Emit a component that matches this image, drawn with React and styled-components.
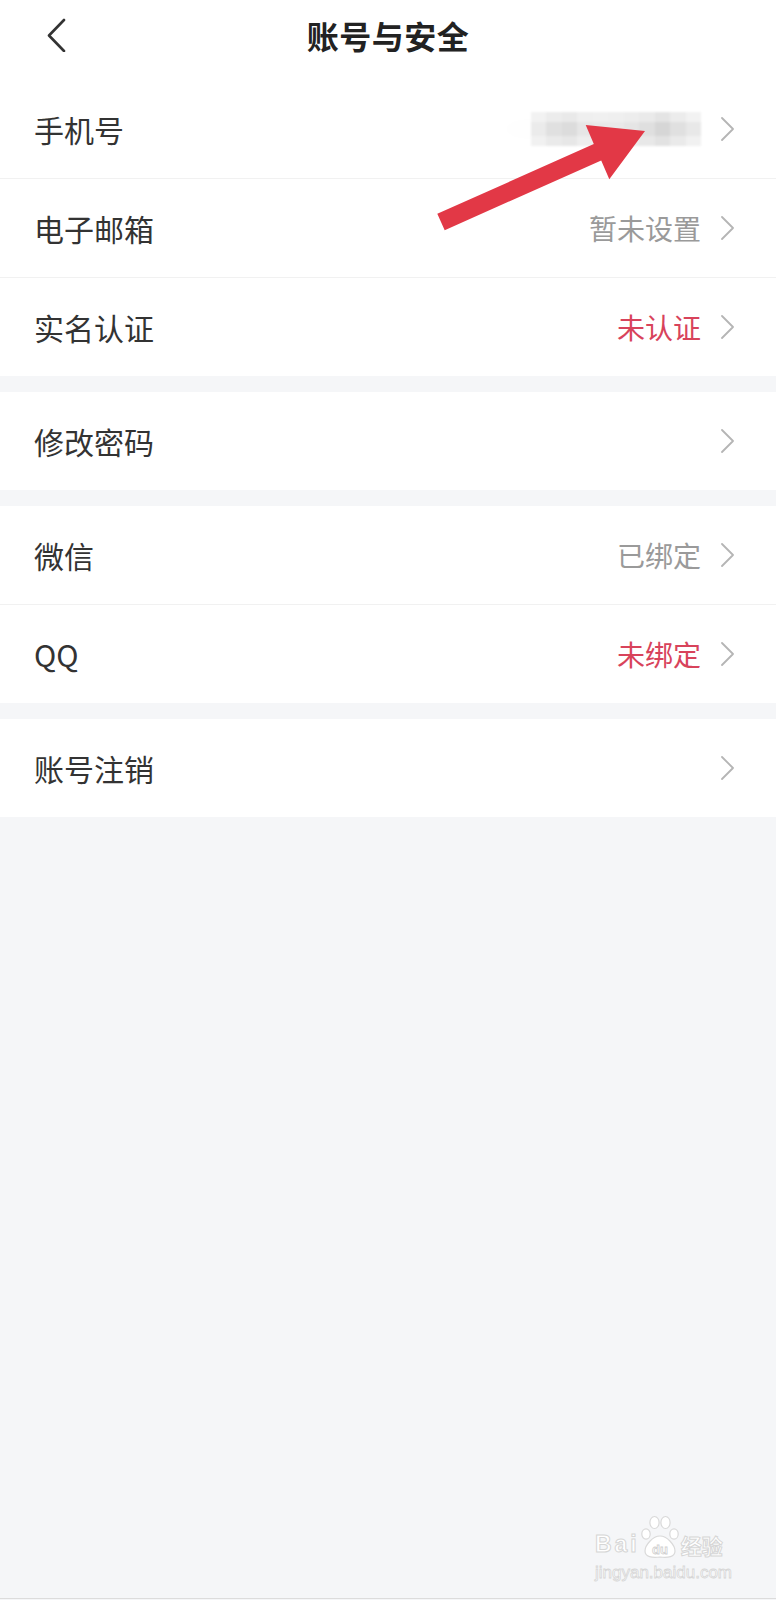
import React from "react";
import styled, { createGlobalStyle } from "styled-components";

const GlobalStyle = createGlobalStyle`
  html, body {
    margin: 0;
    padding: 0;
    background: #f5f6f8;
  }
  body {
    font-family: "Noto Sans CJK SC", "Noto Sans", sans-serif;
  }
`;

const groups = [
  [
    { label: "手机号", masked: true },
    { label: "电子邮箱", value: "暂未设置" },
    { label: "实名认证", value: "未认证", warn: true },
  ],
  [{ label: "修改密码" }],
  [
    { label: "微信", value: "已绑定" },
    { label: "QQ", value: "未绑定", warn: true },
  ],
  [{ label: "账号注销" }],
];

// rough pixel shades for the blurred phone number
const mosaic = [
  ["#f2f2f2", "#ececec", "#e9e9e9", "#efefef", "#f0f0f0", "#efefef", "#ededed", "#eaeaea", "#e4e4e4", "#ececec", "#f2f2f2"],
  ["#ebebeb", "#e0e0e0", "#dcdcdc", "#e6e6e6", "#e8e8e8", "#e9e9e9", "#e5e5e5", "#dfdfdf", "#d6d6d6", "#e0e0e0", "#e8e8e8"],
  ["#f1f1f1", "#eaeaea", "#e7e7e7", "#eeeeee", "#f0f0f0", "#efefef", "#ececec", "#e8e8e8", "#e2e2e2", "#eaeaea", "#f1f1f1"],
];

export default function App() {
  return (
    <Page>
      <GlobalStyle />
      <Header>
        <BackButton aria-label="返回">
          <svg width="20" height="34" viewBox="0 0 20 34">
            <polyline
              points="17,2 2,17.5 17,33"
              fill="none"
              stroke="#333"
              strokeWidth="2.6"
              strokeLinecap="round"
              strokeLinejoin="round"
            />
          </svg>
        </BackButton>
        <Title>账号与安全</Title>
      </Header>

      {groups.map((rows, gi) => (
        <Group key={gi}>
          {rows.map((row) => (
            <Row key={row.label}>
              <Label>{row.label}</Label>
              <Right>
                {row.masked && (
                  <Mosaic>
                    {mosaic.flat().map((c, i) => (
                      <Cell key={i} $shade={c} />
                    ))}
                  </Mosaic>
                )}
                {row.value && <Value $warn={row.warn}>{row.value}</Value>}
                <svg width="13" height="24" viewBox="0 0 13 24">
                  <polyline
                    points="1,1 12,12 1,23"
                    fill="none"
                    stroke="#b5b5b5"
                    strokeWidth="1.8"
                    strokeLinecap="round"
                    strokeLinejoin="round"
                  />
                </svg>
              </Right>
            </Row>
          ))}
        </Group>
      ))}

      <Arrow width="776" height="260" viewBox="0 0 776 260">
        <polygon
          points="437.3,213.8 593.8,144 585.7,125 645,131 609.3,179.3 601.2,160.4 444.7,230.2"
          fill="#e23846"
        />
      </Arrow>

      <Watermark>
        <LogoLine>
          <LogoWord>Bai</LogoWord>
          <svg width="40" height="44" viewBox="0 0 40 44">
            <g fill="#fff" stroke="#d9d9d9" strokeWidth="1.2">
              <ellipse cx="6" cy="19" rx="4.2" ry="5.2" />
              <ellipse cx="14.5" cy="7.5" rx="4.6" ry="6" />
              <ellipse cx="25.5" cy="7.5" rx="4.6" ry="6" />
              <ellipse cx="34" cy="19" rx="4.2" ry="5.2" />
              <path d="M20 21 C13 21 5 30 5 36 C5 42 12 43 20 42 C28 43 35 42 35 36 C35 30 27 21 20 21 Z" />
            </g>
            <text
              x="20"
              y="39"
              textAnchor="middle"
              fontFamily="Liberation Sans, sans-serif"
              fontWeight="700"
              fontSize="13"
              fill="#fff"
              stroke="#d0d0d0"
              strokeWidth="0.8"
            >
              du
            </text>
          </svg>
          <LogoWord $cjk>经验</LogoWord>
        </LogoLine>
        <Domain>jingyan.baidu.com</Domain>
      </Watermark>
      <BottomEdge />
    </Page>
  );
}

const Page = styled.div`
  position: relative;
  width: 776px;
  min-height: 1600px;
  background: #f5f6f8;
  display: flex;
  flex-direction: column;
  overflow: hidden;
`;

const Header = styled.header`
  position: relative;
  box-sizing: border-box;
  height: 80px;
  padding: 0 0 10px;
  background: #fff;
  display: flex;
  align-items: center;
  justify-content: center;
`;

const BackButton = styled.button`
  position: absolute;
  left: 47px;
  top: 18px;
  padding: 0;
  border: 0;
  background: none;
  display: flex;
`;

const Title = styled.h1`
  margin: 0;
  font-size: 32px;
  font-weight: 700;
  color: #222;
  letter-spacing: 0.5px;
  line-height: 1;
`;

const Group = styled.section`
  background: #fff;
  margin-bottom: 16px;
`;

const Row = styled.div`
  height: 98px;
  padding: 0 42px 0 34px;
  display: flex;
  align-items: center;
  justify-content: space-between;
  & + & {
    border-top: 1px solid #f1f1f1;
  }
`;

const Label = styled.span`
  font-size: 30px;
  color: #333;
  line-height: 1;
`;

const Right = styled.div`
  display: flex;
  align-items: center;
  gap: 20px;
`;

const Value = styled.span`
  font-size: 28px;
  line-height: 1;
  color: ${(p) => (p.$warn ? "#d8435b" : "#9a9a9a")};
`;

const Mosaic = styled.div`
  width: 170px;
  height: 34px;
  display: grid;
  grid-template-columns: repeat(11, 1fr);
  grid-template-rows: 10px 14px 10px;
  filter: blur(1px);
  box-shadow: -60px 0 40px -10px rgba(0, 0, 0, 0.015);
`;

const Cell = styled.div`
  background: ${(p) => p.$shade};
`;

const Arrow = styled.svg`
  position: absolute;
  left: 0;
  top: 0;
  pointer-events: none;
`;

const Watermark = styled.div`
  position: absolute;
  right: 44px;
  bottom: 19px;
  display: flex;
  flex-direction: column;
  align-items: flex-start;
  pointer-events: none;
`;

const LogoLine = styled.div`
  display: flex;
  align-items: flex-end;
`;

const LogoWord = styled.span`
  font-family: ${(p) =>
    p.$cjk ? '"Noto Sans CJK SC", sans-serif' : '"Liberation Sans", Arial, sans-serif'};
  font-weight: 700;
  font-size: ${(p) => (p.$cjk ? "21px" : "23px")};
  letter-spacing: ${(p) => (p.$cjk ? "0" : "3px")};
  line-height: 1;
  color: #fff;
  -webkit-text-stroke: 1px #d6d6d6;
  margin-left: ${(p) => (p.$cjk ? "1px" : "0")};
  padding-bottom: 3px;
`;

const Domain = styled.span`
  font-family: "Liberation Sans", Arial, sans-serif;
  font-size: 17px;
  line-height: 1;
  margin-top: 5px;
  color: #fff;
  -webkit-text-stroke: 0.8px #d6d6d6;
`;

const BottomEdge = styled.div`
  position: absolute;
  left: 0;
  right: 0;
  bottom: 1px;
  height: 1px;
  background: #dcdcdc;
`;
